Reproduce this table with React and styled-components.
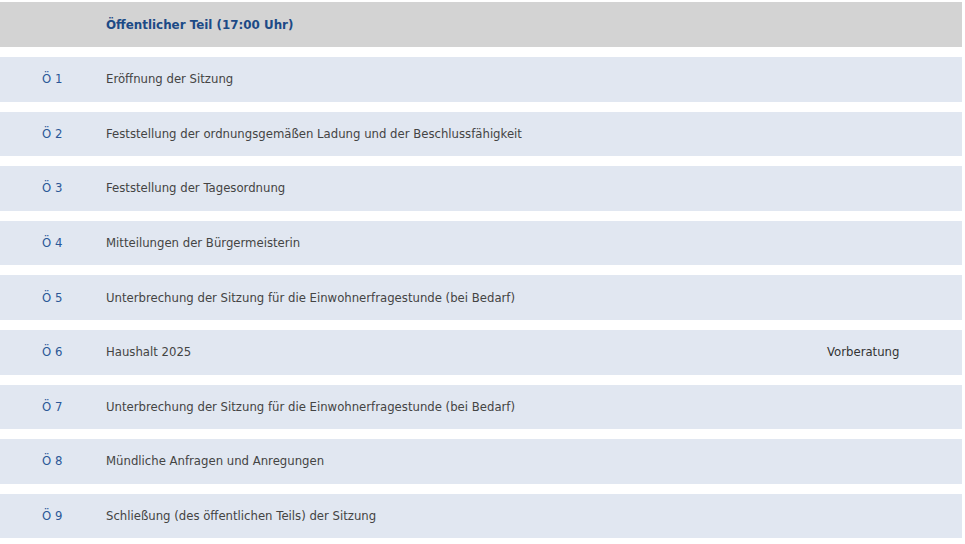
import React from "react";
import styled, { createGlobalStyle } from "styled-components";

const Global = createGlobalStyle`
  html, body { margin: 0; padding: 0; background: #ffffff; }
  body { font-family: "DejaVu Sans", Verdana, sans-serif; font-size: 11.7px; }
`;

const Agenda = styled.div`
  width: 962px;
  padding-top: 2px;
  display: flex;
  flex-direction: column;
  gap: 10px;
`;

const Row = styled.div`
  display: grid;
  grid-template-columns: 106px 721px 1fr;
  align-items: center;
  height: ${(p) => (p.$head ? "45px" : "44.6px")};
  background: ${(p) => (p.$head ? "#d3d3d3" : "#e1e7f1")};
`;

const Num = styled.div`
  padding-left: 42px;
  color: #2b5797;
  white-space: nowrap;
`;

const Title = styled.div`
  color: ${(p) => (p.$head ? "#1c4a86" : "#444444")};
  font-weight: ${(p) => (p.$head ? 700 : 400)};
  font-size: ${(p) => (p.$head ? "11.9px" : "11.7px")};
  white-space: nowrap;
`;

const Note = styled.div`
  color: #333333;
  white-space: nowrap;
`;

const items = [
  ["Ö 1", "Eröffnung der Sitzung", ""],
  ["Ö 2", "Feststellung der ordnungsgemäßen Ladung und der Beschlussfähigkeit", ""],
  ["Ö 3", "Feststellung der Tagesordnung", ""],
  ["Ö 4", "Mitteilungen der Bürgermeisterin", ""],
  ["Ö 5", "Unterbrechung der Sitzung für die Einwohnerfragestunde (bei Bedarf)", ""],
  ["Ö 6", "Haushalt 2025", "Vorberatung"],
  ["Ö 7", "Unterbrechung der Sitzung für die Einwohnerfragestunde (bei Bedarf)", ""],
  ["Ö 8", "Mündliche Anfragen und Anregungen", ""],
  ["Ö 9", "Schließung (des öffentlichen Teils) der Sitzung", ""],
];

export default function App() {
  return (
    <>
      <Global />
      <Agenda>
        <Row $head>
          <Num />
          <Title $head>Öffentlicher Teil (17:00 Uhr)</Title>
          <Note />
        </Row>
        {items.map(([n, t, v]) => (
          <Row key={n}>
            <Num>{n}</Num>
            <Title>{t}</Title>
            <Note>{v}</Note>
          </Row>
        ))}
      </Agenda>
    </>
  );
}
